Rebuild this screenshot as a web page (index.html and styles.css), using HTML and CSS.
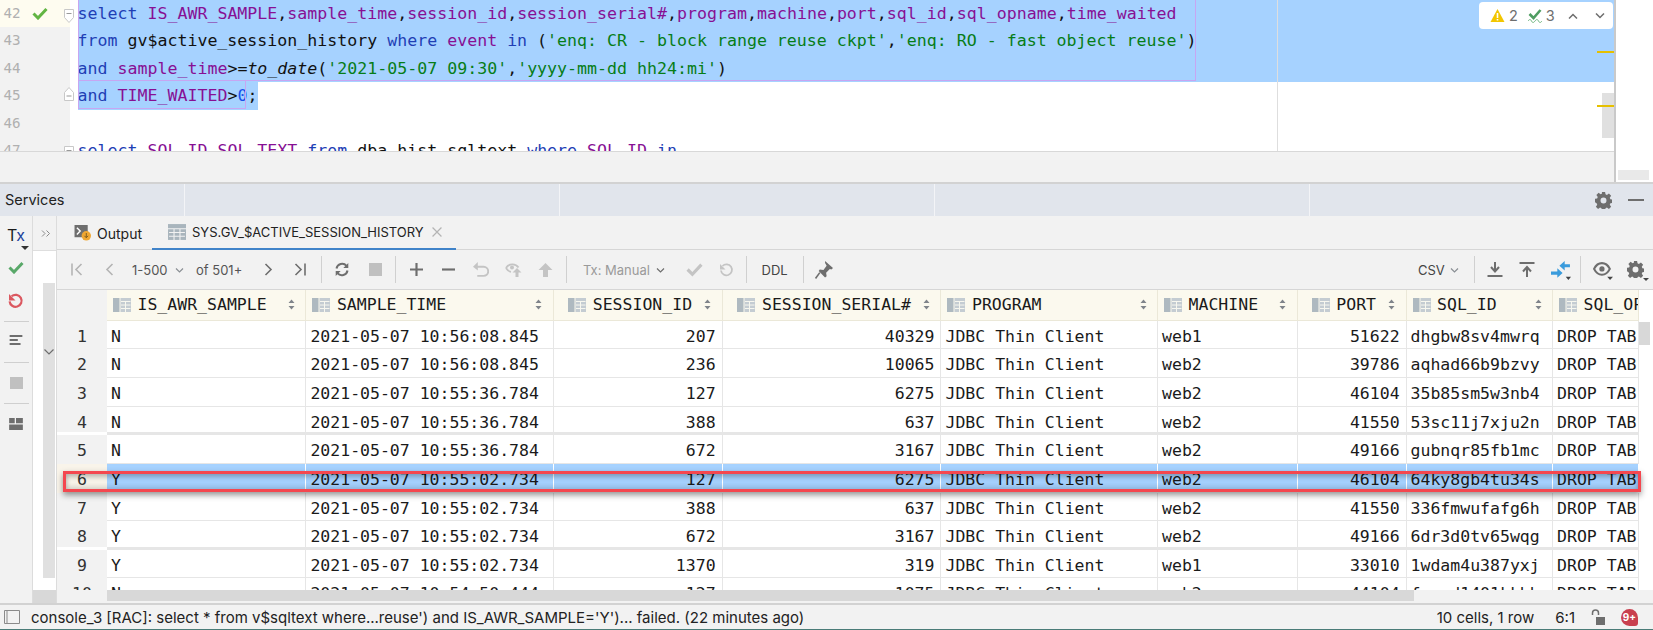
FILE: index.html
```html
<!DOCTYPE html>
<html lang="en">
<head>
<meta charset="utf-8">
<title>Services</title>
<link rel="stylesheet" href="styles.css">
</head>
<body>
<svg class="defs" width="0" height="0">
  <defs>
    <symbol id="col" viewBox="0 0 18 14">
      <rect x="0" y="0" width="6.500" height="14" fill="#aeb9c0"/>
      <rect x="7.500" y="0" width="10.500" height="14" fill="#c4ccd2"/>
      <path d="M8 3.500h9.500M8 7h9.500M8 10.500h9.500M12.500 3v11" stroke="#f7f7ef" stroke-width="1" fill="none"/>
    </symbol>
    <symbol id="sort" viewBox="0 0 7 11">
      <path d="M3.500 0.500 6.500 4h-6zM3.500 10.500 .5 7h6z" fill="#7f848a"/>
    </symbol>
    <symbol id="gear" viewBox="0 0 16 16">
      <path fill-rule="evenodd" fill="#6e6e6e" d="M6.500 0h3l.4 2.200 1.300.6 1.900-1.300 2.100 2.100-1.300 1.900.6 1.300 2.200.4v3l-2.200.4-.6 1.300 1.300 1.900-2.100 2.100-1.900-1.300-1.300.6-.4 2.200h-3l-.4-2.200-1.300-.6-1.900 1.300-2.100-2.100 1.300-1.900-.6-1.300L-.2 9.500v-3l2.200-.4.6-1.300L1.300 2.900 3.400.8l1.900 1.300 1.300-.6zM8 5.200a2.800 2.800 0 1 0 0 5.600 2.800 2.800 0 0 0 0-5.600z"/>
    </symbol>
  </defs>
</svg>

<section class="top">
  <div class="editor-col">
    <div class="editor">
      <div class="gutter">
        <div class="ln ln-active">42<svg class="ok-mark" viewBox="0 0 16 13"><path d="M1.500 6.500 6 11 14.500 2" fill="none" stroke="#62b543" stroke-width="3"/></svg></div>
        <div class="ln">43</div>
        <div class="ln">44</div>
        <div class="ln">45</div>
        <div class="ln">46</div>
        <div class="ln">47</div>
        <svg class="fold fold-a" viewBox="0 0 10 14"><path d="M.5.500h9v8L5 13.500.5 8.500z" fill="#fff" stroke="#c8c8c8"/><path d="M2.500 4.500h5" stroke="#999"/></svg>
        <svg class="fold fold-b" viewBox="0 0 10 14"><path d="M.5 13.500h9v-8L5 .5.500 5.500z" fill="#fff" stroke="#c8c8c8"/><path d="M2.500 9h5" stroke="#999"/></svg>
        <svg class="fold fold-c" viewBox="0 0 10 14"><path d="M.5.500h9v13h-9z" fill="#fff" stroke="#c8c8c8"/><path d="M2.500 4.500h5" stroke="#999"/></svg>
      </div>
      <div class="code">
        <div class="cl sel"><span class="k">select</span> <span class="i">IS_AWR_SAMPLE</span>,<span class="i">sample_time</span>,<span class="i">session_id</span>,<span class="i">session_serial#</span>,<span class="i">program</span>,<span class="i">machine</span>,<span class="i">port</span>,<span class="i">sql_id</span>,<span class="i">sql_opname</span>,<span class="i">time_waited</span></div>
        <div class="cl sel"><span class="k">from</span> gv$active_session_history <span class="k">where</span> <span class="i">event</span> <span class="k">in</span> (<span class="s">'enq: CR - block range reuse ckpt'</span>,<span class="s">'enq: RO - fast object reuse'</span>)</div>
        <div class="cl sel"><span class="k">and</span> <span class="i">sample_time</span>&gt;=<em>to_date</em>(<span class="s">'2021-05-07 09:30'</span>,<span class="s">'yyyy-mm-dd hh24:mi'</span>)</div>
        <div class="cl"><span class="sel-part"><span class="k">and</span> <span class="i">TIME_WAITED</span>&gt;<span class="n">0</span>;</span></div>
        <div class="cl"></div>
        <div class="cl"><span class="k">select</span> <span class="i">SQL_ID</span>,<span class="i">SQL_TEXT</span> <span class="k">from</span> dba_hist_sqltext <span class="k">where</span> <span class="i">SQL_ID</span> <span class="k">in</span></div>
        <div class="stmt stmt-a"></div>
        <div class="stmt stmt-b"></div>
        <div class="margin-line"></div>
      </div>
      <div class="inspect">
        <svg class="tri" viewBox="0 0 14 13"><path d="M7 0 14 13H0z" fill="#f2c600"/><path d="M6.200 4h1.600v5H6.200zM6.200 10h1.600v1.600H6.200z" fill="#fff"/></svg><span>2</span>
        <svg class="chk" viewBox="0 0 14 15"><path d="M1.500 6 5.500 10 12.500 2" fill="none" stroke="#4f9d62" stroke-width="2.600"/><path d="M0 13c1.500-2 2.500-2 3.500 0s2 2 3.500 0 2.500-2 3.500 0 2 2 3.500 0" fill="none" stroke="#6bb37c"/></svg><span class="num3">3</span>
        <svg class="nav nav-up" viewBox="0 0 10 6"><path d="M1 5.500 5 1.500l4 4" fill="none" stroke="#6e6e6e" stroke-width="1.500"/></svg>
        <svg class="nav nav-down" viewBox="0 0 10 6"><path d="M1 .5 5 4.500 9 .5" fill="none" stroke="#6e6e6e" stroke-width="1.500"/></svg>
      </div>
      <i class="mark mark-a"></i>
      <div class="editor-thumb"></div>
      <i class="mark mark-b"></i>
    </div>
    <div class="editor-foot"></div>
  </div>
  <div class="top-side"><div class="top-side-box"></div></div>
</section>

<header class="svc-bar">
  <span class="svc-seg svc-title">Services</span>
  <span class="svc-seg svc-s"></span>
  <span class="svc-seg svc-s"></span>
  <span class="svc-seg svc-s"></span>
  <span class="svc-end">
    <svg class="svc-gear"><use href="#gear"/></svg>
    <i class="svc-min"></i>
  </span>
</header>

<section class="svc-body">
  <aside class="strip">
    <div class="tx">T<span>x</span><i class="drop"></i></div>
    <svg class="s-ic s-check" viewBox="0 0 16 13"><path d="M1.500 6.500 6 11 14.500 2" fill="none" stroke="#59a869" stroke-width="3"/></svg>
    <svg class="s-ic s-undo" viewBox="0 0 16 16"><path d="M3.600 3.300a6 6 0 1 1-2 5" fill="none" stroke="#db5860" stroke-width="2.200"/><path d="M1 1v6.500h6.500z" fill="#db5860"/></svg>
    <hr class="s-sep s-sep-a">
    <svg class="s-ic s-list" viewBox="0 0 14 11"><path d="M0 0h14v2.200H0zM0 4.400h9v2.200H0zM0 8.800h12V11H0z" fill="#6e6e6e"/></svg>
    <hr class="s-sep s-sep-b">
    <i class="s-stop"></i>
    <hr class="s-sep s-sep-c">
    <svg class="s-ic s-grid" viewBox="0 0 16 14"><path d="M0 0h6.500v6H0zM8 0h8v6H8zM0 7.500h16V14H0z" fill="#6e6e6e"/></svg>
  </aside>
  <div class="collapse">
    <div class="collapse-top"><svg viewBox="0 0 9 7"><path d="M.5.500 3.500 3.500.5 6.500M5 .5 8 3.500 5 6.500" fill="none" stroke="#8a8a8a"/></svg></div>
    <div class="collapse-body">
      <div class="collapse-rail"><svg viewBox="0 0 10 6"><path d="M.5.500 5 5 9.500.5" fill="none" stroke="#6e6e6e" stroke-width="1.200"/></svg></div>
    </div>
  </div>
  <div class="pane">
    <nav class="tabs">
      <div class="tab tab-output">
        <svg class="tab-ic" viewBox="0 0 18 17"><rect x="0" y="0" width="14" height="13" fill="#6e6e6e"/><path d="M2.500 3 6 6.500 2.500 10" stroke="#fff" stroke-width="1.500" fill="none"/><circle cx="12.500" cy="11.500" r="5" fill="#f0a732"/><path d="M12.500 8.500v5M10.500 11.500l2 2 2-2" stroke="#7a5a1e" fill="none"/></svg>
        <span>Output</span>
      </div>
      <div class="tab tab-active">
        <svg class="tab-ic" viewBox="0 0 17 15"><rect width="17" height="15" fill="#a9b5bd"/><path d="M0 4.500h17M1 8h15M1 11.500h15M5.700 4v11M11.300 4v11" stroke="#f2f2f2"/></svg>
        <span>SYS.GV_$ACTIVE_SESSION_HISTORY</span>
        <svg class="tab-x" viewBox="0 0 9 9"><path d="M.5.500l8 8M8.500.5l-8 8" stroke="#b4b4b4" stroke-width="1.100"/></svg>
      </div>
    </nav>
    <div class="toolbar">
      <button class="tb"><svg class="w12" viewBox="0 0 12 13"><path d="M1 .5v12M10.500 1 5 6.500 10.500 12" fill="none" stroke="#b4b4b4" stroke-width="1.600"/></svg></button>
      <button class="tb"><svg class="w9" viewBox="0 0 8 13"><path d="M7 1 1.500 6.500 7 12" fill="none" stroke="#b4b4b4" stroke-width="1.600"/></svg></button>
      <span class="tb-text tb-range">1-500</span>
      <svg class="chev chev-a" viewBox="0 0 8 5"><path d="M.5.500 4 4 7.500.5" fill="none" stroke="#8a8f94" stroke-width="1.200"/></svg>
      <span class="tb-text tb-of">of 501+</span>
      <button class="tb tb-next"><svg class="w9" viewBox="0 0 8 13"><path d="M1 1l5.500 5.500L1 12" fill="none" stroke="#6e6e6e" stroke-width="1.600"/></svg></button>
      <button class="tb"><svg class="w12" viewBox="0 0 12 13"><path d="M11 .5v12M1.500 1 7 6.500 1.500 12" fill="none" stroke="#6e6e6e" stroke-width="1.600"/></svg></button>
      <i class="tb-sep tb-sep-a"></i>
      <button class="tb tb-refresh"><svg class="w16" viewBox="0 0 15 15"><path d="M2 6.500A5.700 5.700 0 0 1 12 3.800M13 8.500A5.700 5.700 0 0 1 3 11.200" fill="none" stroke="#6e6e6e" stroke-width="2"/><path d="M13.800 1v5h-5zM1.200 14V9h5z" fill="#6e6e6e"/></svg></button>
      <button class="tb tb-halt"><i class="tb-stop"></i></button>
      <i class="tb-sep tb-sep-b"></i>
      <button class="tb tb-add"><svg class="w13" viewBox="0 0 12 12"><path d="M6 0v12M0 6h12" stroke="#6e6e6e" stroke-width="2"/></svg></button>
      <button class="tb"><svg class="w13" viewBox="0 0 12 12"><path d="M0 6h12" stroke="#6e6e6e" stroke-width="2"/></svg></button>
      <button class="tb tb-undo"><svg class="w16" viewBox="0 0 15 14"><path d="M2 4.500h8a3.800 3.800 0 0 1 0 8.500H4" fill="none" stroke="#c4c4c4" stroke-width="1.800"/><path d="M4.500 0v8L0 4.500z" fill="#c4c4c4"/></svg></button>
      <button class="tb"><svg class="w17" viewBox="0 0 16 15"><path d="M.5 6C3 1.500 10 1 13 5.500" fill="none" stroke="#c4c4c4" stroke-width="1.800"/><path d="M.5 6c1.200 2 2.800 3.500 5 3.800" fill="none" stroke="#c4c4c4" stroke-width="1.800"/><circle cx="6.500" cy="5.500" r="2" fill="#c4c4c4"/><path d="M11.500 6 16 10.500h-3V15h-3v-4.500H7z" fill="#c4c4c4"/></svg></button>
      <button class="tb"><svg class="w15" viewBox="0 0 14 14"><path d="M7 0l7 7h-4.500v7h-5V7H0z" fill="#c4c4c4"/></svg></button>
      <i class="tb-sep tb-sep-c"></i>
      <span class="tb-text tb-tx">Tx: Manual</span>
      <svg class="chev chev-b" viewBox="0 0 8 5"><path d="M.5.500 4 4 7.500.5" fill="none" stroke="#6e6e6e" stroke-width="1.200"/></svg>
      <button class="tb tb-ok"><svg class="w17" viewBox="0 0 16 13"><path d="M1.500 6.500 6 11 14.500 2" fill="none" stroke="#c4c4c4" stroke-width="3"/></svg></button>
      <button class="tb tb-rev"><svg class="w15" viewBox="0 0 14 14"><path d="M3 3a5.500 5.500 0 1 1-1.500 4.500" fill="none" stroke="#c4c4c4" stroke-width="1.800"/><path d="M.5 1v5.500H6z" fill="#c4c4c4"/></svg></button>
      <i class="tb-sep tb-sep-d"></i>
      <span class="tb-text tb-ddl">DDL</span>
      <i class="tb-sep tb-sep-e"></i>
      <button class="tb tb-pin"><svg class="w18" viewBox="0 0 17 17"><path d="M9.500 0 17 6.500l-1.500 1.500-1.500-.5-3.500 3.500.5 3.500-1.500 1-6-6 1-1.500 3.500.5L11 4.500 9.500 2z" fill="#6e6e6e"/><path d="M4.500 11 .5 16.500" stroke="#6e6e6e" stroke-width="1.500"/></svg></button>
      <span class="tb-text tb-csv">CSV</span>
      <svg class="chev chev-c" viewBox="0 0 8 5"><path d="M.5.500 4 4 7.500.5" fill="none" stroke="#8a8f94" stroke-width="1.200"/></svg>
      <i class="tb-sep tb-sep-f"></i>
      <button class="tb tb-down"><svg class="w16" viewBox="0 0 15 15"><path d="M7.500 0v8M3.500 5l4 4.500 4-4.500" fill="none" stroke="#6e6e6e" stroke-width="2"/><path d="M0 14h15" stroke="#6e6e6e" stroke-width="2"/></svg></button>
      <button class="tb"><svg class="w16" viewBox="0 0 15 15"><path d="M7.500 15V6.500M3.500 9.500l4-4.500 4 4.500" fill="none" stroke="#6e6e6e" stroke-width="2"/><path d="M0 1h15" stroke="#6e6e6e" stroke-width="2"/></svg></button>
      <button class="tb tb-cmp"><svg viewBox="0 0 19 19"><path d="M0 10h6V7l5 4.500L6 16v-3H0zM18 3v3h-5v3L8 4.500 13 0v3z" fill="#3a9bdc"/><path d="M14 15h5l-2.500 3z" fill="#444"/></svg></button>
      <i class="tb-sep tb-sep-g"></i>
      <button class="tb tb-eye"><svg viewBox="0 0 19 17"><path d="M1 6.500C3 2.500 6 1 8.500 1S14 2.500 16 6.500C14 10.500 11 12 8.500 12S3 10.500 1 6.500z" fill="none" stroke="#6e6e6e" stroke-width="2"/><circle cx="8.500" cy="6.500" r="2.500" fill="#6e6e6e"/><path d="M13.500 14h5.500L16.200 17z" fill="#444"/></svg></button>
      <button class="tb tb-set"><svg class="set-g"><use href="#gear"/></svg><i class="drop"></i></button>
    </div>

    <div class="table-area">
      <div class="grid" role="table">
        <div class="row head">
          <div class="hc corner"></div>
          <div class="hc"><svg class="hi"><use href="#col"/></svg><span class="ht">IS_AWR_SAMPLE</span><svg class="so"><use href="#sort"/></svg></div>
          <div class="hc"><svg class="hi"><use href="#col"/></svg><span class="ht">SAMPLE_TIME</span><svg class="so"><use href="#sort"/></svg></div>
          <div class="hc hr"><svg class="hi"><use href="#col"/></svg><span class="ht">SESSION_ID</span><svg class="so"><use href="#sort"/></svg></div>
          <div class="hc hr"><svg class="hi"><use href="#col"/></svg><span class="ht">SESSION_SERIAL#</span><svg class="so"><use href="#sort"/></svg></div>
          <div class="hc"><svg class="hi"><use href="#col"/></svg><span class="ht">PROGRAM</span><svg class="so"><use href="#sort"/></svg></div>
          <div class="hc"><svg class="hi"><use href="#col"/></svg><span class="ht">MACHINE</span><svg class="so"><use href="#sort"/></svg></div>
          <div class="hc hr"><svg class="hi"><use href="#col"/></svg><span class="ht">PORT</span><svg class="so"><use href="#sort"/></svg></div>
          <div class="hc"><svg class="hi"><use href="#col"/></svg><span class="ht">SQL_ID</span><svg class="so"><use href="#sort"/></svg></div>
          <div class="hc"><svg class="hi"><use href="#col"/></svg><span class="ht">SQL_OPNAME</span></div>
        </div>
        <div class="row"><div class="c num">1</div><div class="c">N</div><div class="c">2021-05-07 10:56:08.845</div><div class="c r">207</div><div class="c r">40329</div><div class="c">JDBC Thin Client</div><div class="c">web1</div><div class="c r">51622</div><div class="c">dhgbw8sv4mwrq</div><div class="c">DROP TAB</div></div>
        <div class="row"><div class="c num">2</div><div class="c">N</div><div class="c">2021-05-07 10:56:08.845</div><div class="c r">236</div><div class="c r">10065</div><div class="c">JDBC Thin Client</div><div class="c">web2</div><div class="c r">39786</div><div class="c">aqhad66b9bzvy</div><div class="c">DROP TAB</div></div>
        <div class="row"><div class="c num">3</div><div class="c">N</div><div class="c">2021-05-07 10:55:36.784</div><div class="c r">127</div><div class="c r">6275</div><div class="c">JDBC Thin Client</div><div class="c">web2</div><div class="c r">46104</div><div class="c">35b85sm5w3nb4</div><div class="c">DROP TAB</div></div>
        <div class="row thick"><div class="c num">4</div><div class="c">N</div><div class="c">2021-05-07 10:55:36.784</div><div class="c r">388</div><div class="c r">637</div><div class="c">JDBC Thin Client</div><div class="c">web2</div><div class="c r">41550</div><div class="c">53sc11j7xju2n</div><div class="c">DROP TAB</div></div>
        <div class="row"><div class="c num">5</div><div class="c">N</div><div class="c">2021-05-07 10:55:36.784</div><div class="c r">672</div><div class="c r">3167</div><div class="c">JDBC Thin Client</div><div class="c">web2</div><div class="c r">49166</div><div class="c">gubnqr85fb1mc</div><div class="c">DROP TAB</div></div>
        <div class="row selected"><div class="c num">6</div><div class="c">Y</div><div class="c">2021-05-07 10:55:02.734</div><div class="c r">127</div><div class="c r">6275</div><div class="c">JDBC Thin Client</div><div class="c">web2</div><div class="c r">46104</div><div class="c">64ky8gb4tu34s</div><div class="c">DROP TAB</div></div>
        <div class="row"><div class="c num">7</div><div class="c">Y</div><div class="c">2021-05-07 10:55:02.734</div><div class="c r">388</div><div class="c r">637</div><div class="c">JDBC Thin Client</div><div class="c">web2</div><div class="c r">41550</div><div class="c">336fmwufafg6h</div><div class="c">DROP TAB</div></div>
        <div class="row thick"><div class="c num">8</div><div class="c">Y</div><div class="c">2021-05-07 10:55:02.734</div><div class="c r">672</div><div class="c r">3167</div><div class="c">JDBC Thin Client</div><div class="c">web2</div><div class="c r">49166</div><div class="c">6dr3d0tv65wqg</div><div class="c">DROP TAB</div></div>
        <div class="row"><div class="c num">9</div><div class="c">Y</div><div class="c">2021-05-07 10:55:02.734</div><div class="c r">1370</div><div class="c r">319</div><div class="c">JDBC Thin Client</div><div class="c">web1</div><div class="c r">33010</div><div class="c">1wdam4u387yxj</div><div class="c">DROP TAB</div></div>
        <div class="row"><div class="c num">10</div><div class="c">N</div><div class="c">2021-05-07 10:54:50.444</div><div class="c r">127</div><div class="c r">1075</div><div class="c">JDBC Thin Client</div><div class="c">web2</div><div class="c r">44104</div><div class="c">fgqud1401kkbb</div><div class="c">DROP TAB</div></div>
      </div>
      <div class="vscroll"><i></i></div>
    </div>
    <div class="hscroll"><span class="hs-corner"></span><i></i></div>
  </div>
</section>

<footer class="status">
  <svg class="st-ic" viewBox="0 0 16 14"><path d="M.5.500h15v13H.5z" fill="none" stroke="#8a8a8a"/><path d="M3 1v12" stroke="#8a8a8a"/></svg>
  <span class="st-msg">console_3 [RAC]: select * from v$sqltext where...reuse') and IS_AWR_SAMPLE='Y')... failed. (22 minutes ago)</span>
  <span class="st-cells">10 cells, 1 row</span>
  <span class="st-pos">6:1</span>
  <svg class="st-lock" viewBox="0 0 15 16"><path d="M1.500 6V4a3 3 0 0 1 6 0v2" fill="none" stroke="#6e6e6e" stroke-width="1.500"/><rect x="5" y="8" width="9" height="8" fill="#6e6e6e"/></svg>
  <span class="st-badge">9+</span>
</footer>

<div class="callout"></div>
</body>
</html>
```

FILE: styles.css
```css
* { box-sizing: border-box; }
html, body { margin: 0; padding: 0; }
body {
  position: relative;
  width: 1653px;
  height: 630px;
  overflow: hidden;
  display: flex;
  flex-direction: column;
  background: #f2f2f2;
  color: #222;
  font-family: Inter, "Noto Sans", sans-serif;
  font-size: 14px;
}
.defs { position: absolute; }

/* editor */
.top { display: flex; height: 182px; flex: none; }
.editor-col { width: 1614px; display: flex; flex-direction: column; }
.editor { position: relative; height: 152px; display: flex; overflow: hidden; background: #fff; border-bottom: 1px solid #d8d8d8; }
.gutter { position: relative; width: 69.5px; flex: none; background: #f2f2f2; }
.ln { position: relative; height: 27.4px; padding-left: 3.5px; font: 14.2px/27.4px "DejaVu Sans Mono", monospace; color: #b0b0b0; }
.ln-active { background: #fefcf0; }
.ok-mark { position: absolute; left: 32px; top: 7px; width: 16px; height: 13px; }
.fold { position: absolute; left: 64px; width: 10px; height: 14px; z-index: 2; }
.fold-a { top: 9px; }
.fold-b { top: 87px; }
.fold-c { top: 146px; }
.code { position: relative; flex: 1; font: 16.6px/27.4px "DejaVu Sans Mono", monospace; color: #111; }
.cl { height: 27.4px; padding-left: 8px; white-space: pre; }
.cl.sel { background: linear-gradient(#a6d2ff, #a6d2ff) no-repeat 8px 0 / 100% 100%; }
.sel-part { display: inline-block; height: 27.4px; width: 180px; background: #a6d2ff; }
.k { color: #1f3fb5; }
.i { color: #871094; }
.s { color: #067d17; }
.n { color: #1750eb; }
.cl em { font-style: italic; }
.stmt { position: absolute; border: 1px solid #c7a6f2; pointer-events: none; }
.stmt-a { left: 8px; top: -2px; width: 1118.5px; height: 83px; }
.stmt-b { left: 8px; top: 80px; width: 168.5px; height: 29px; border-top: 0; }
.margin-line { position: absolute; left: 1207.5px; top: 0; bottom: 0; width: 1px; background: #dedede; }
.inspect {
  position: absolute; left: 1478.5px; top: 2px; width: 134px; height: 27px;
  display: flex; align-items: center; padding-left: 11.5px;
  background: #fff; border-radius: 4px; color: #6e6e6e; font-size: 14.5px;
}
.tri { width: 15px; height: 13px; margin-right: 4px; flex: none; }
.chk { width: 14px; height: 15px; margin-left: 10px; margin-right: 4px; flex: none; }
.nav { width: 10px; height: 6px; flex: none; }
.nav-up { margin-left: 13.5px; }
.nav-down { margin-left: 17px; }
.mark { position: absolute; left: 1597px; width: 17px; height: 2px; background: #e6c000; z-index: 2; }
.mark-a { top: 51px; }
.mark-b { top: 105px; }
.editor-thumb { position: absolute; left: 1602px; top: 93px; width: 12px; height: 45px; background: #e0e0e0; }
.editor-foot { flex: 1; background: #f2f2f2; }
.top-side { flex: 1; background: #fff; border-left: 2px solid #c9c9c9; position: relative; }
.top-side-box { position: absolute; left: 1px; right: 3px; top: 169px; height: 12px; background: #e9e9e9; border: 1px solid #fff; }

/* services title bar */
.svc-bar { height: 34px; flex: none; display: flex; align-items: stretch; background: #e1e5ec; border-top: 2px solid #d2d2d2; }
.svc-seg { display: block; border-right: 1px solid #f3f4f7; }
.svc-title { width: 185px; padding-left: 5px; line-height: 32px; font-size: 14.5px; color: #222; }
.svc-s { width: 375px; }
.svc-end { flex: 1; display: flex; align-items: center; justify-content: flex-end; gap: 16px; padding-right: 9px; }
.svc-gear { width: 17px; height: 17px; }
.svc-min { width: 16px; height: 2px; background: #6e6e6e; }

/* services body */
.svc-body { flex: none; height: 387px; display: flex; }
.strip { width: 33px; flex: none; border-right: 1px solid #dcdcdc; display: flex; flex-direction: column; align-items: center; padding-top: 9px; }
.tx { position: relative; width: 20px; height: 24px; font-size: 16px; line-height: 20px; text-align: center; color: #1b1b1b; flex: none; }
.tx span { color: #1b3f9a; }
.drop { position: absolute; width: 0; height: 0; border: 4px solid transparent; border-top: 4px solid #333; border-bottom: 0; }
.tx .drop { right: -3px; top: 21px; }
.s-ic { display: block; flex: none; }
.s-check { width: 16px; height: 13px; margin-top: 12px; }
.s-undo { width: 16px; height: 16px; margin-top: 19px; }
.s-sep { width: 25px; height: 1px; border: 0; background: #cfcfcf; margin: 0; flex: none; }
.s-sep-a { margin-top: 12px; }
.s-list { width: 14px; height: 10px; margin-top: 13px; }
.s-sep-b { margin-top: 17px; }
.s-stop { display: block; width: 13px; height: 12px; background: #c0c0c0; margin-top: 14px; flex: none; }
.s-sep-c { margin-top: 14px; }
.s-grid { width: 16px; height: 12px; margin-top: 14px; }

.collapse { width: 24px; flex: none; display: flex; flex-direction: column; border-right: 1px solid #dcdcdc; }
.collapse-top { height: 35px; flex: none; display: flex; align-items: center; justify-content: center; border-bottom: 1px solid #dedede; padding-left: 2px; }
.collapse-top svg { width: 10px; height: 7px; }
.collapse-body { position: relative; flex: 1; background: #fff; padding: 32px 1px 25px 10px; }
.collapse-body::after { content: ""; position: absolute; left: 0; right: 0; bottom: 0; height: 13px; background: #d8d8d8; }
.collapse-rail { height: 100%; width: 12px; background: #e0e0e0; display: flex; justify-content: center; padding-top: 66px; }
.collapse-rail svg { width: 10px; height: 6px; }

.pane { flex: 1; min-width: 0; display: flex; flex-direction: column; }
.tabs { height: 34px; flex: none; display: flex; border-bottom: 1px solid #d6d6d6; padding-left: 17px; background: #f2f2f2; }
.tab { display: flex; align-items: center; height: 34px; font-size: 14px; color: #222; flex: none; }
.tab-output { width: 78px; gap: 5px; }
.tab-ic { width: 18px; height: 16px; flex: none; }
.tab-active { width: 304px; padding-left: 16px; gap: 6px; border-bottom: 2px solid #4083c9; font-size: 13px; }
.tab-x { width: 10px; height: 10px; margin-left: 2px; flex: none; }

.toolbar { height: 40px; flex: none; display: flex; align-items: center; padding: 0 2px 0 4px; border-bottom: 1px solid #d6d6d6; }
.tb { position: relative; width: 32px; height: 24px; flex: none; border: 0; padding: 0; background: none; display: flex; align-items: center; justify-content: center; }
.tb svg { display: block; }
.w9 { width: 9px; height: 13px; }
.w12 { width: 12px; height: 13px; }
.w13 { width: 13px; height: 13px; }
.w15 { width: 15px; height: 14px; }
.w16 { width: 16px; height: 15px; }
.w17 { width: 17px; height: 15px; }
.w18 { width: 18px; height: 18px; }
.tb-text { flex: none; font-size: 13px; color: #555; white-space: nowrap; }
.tb-range { margin-left: 7px; width: 36px; }
.chev { width: 9px; height: 5px; flex: none; margin-top: 2px; }
.chev-a { margin-left: 7px; }
.tb-of { margin-left: 12px; width: 47px; }
.tb-next { margin-left: 9px; }
.tb-sep { width: 1px; height: 27px; background: #d0d0d0; flex: none; }
.tb-sep-a { margin-left: 5px; }
.tb-refresh { margin-left: 4px; }
.tb-halt { margin-left: 1px; }
.tb-stop { display: block; width: 13px; height: 13px; background: #c0c0c0; }
.tb-sep-b { margin-left: 4px; }
.tb-add { margin-left: 4px; }
.tb-undo { margin-left: 1px; }
.tb-sep-c { margin-left: 5px; }
.tb-tx { margin-left: 16px; width: 63px; color: #9a9a9a; }
.chev-b { margin-left: 10px; }
.tb-ok { margin-left: 13.5px; }
.tb-rev { margin-left: -.5px; }
.tb-sep-d { margin-left: 4px; }
.tb-ddl { margin-left: 14.5px; width: 25px; color: #444; }
.tb-sep-e { margin-left: 16.5px; }
.tb-pin { margin-left: 3.5px; }
.tb-csv { margin-left: auto; width: 24px; color: #444; }
.chev-c { margin-left: 8px; }
.tb-sep-f { margin-left: 14.5px; }
.tb-down { margin-left: 4.5px; }
.tb-cmp { margin-left: 2px; }
.tb-cmp svg { width: 20px; height: 20px; margin-top: 2px; }
.tb-sep-g { margin-left: 3px; }
.tb-eye { margin-left: 5px; }
.tb-eye svg { width: 20px; height: 18px; margin-top: 2px; margin-left: 2px; }
.tb-set { margin-left: 1px; }
.tb-set .set-g { width: 17px; height: 17px; }
.tb-set .drop { right: 2px; bottom: 1px; border-width: 3.5px; border-bottom: 0; border-top-color: #444; }

/* result grid */
.table-area { height: 300px; flex: none; display: flex; overflow: hidden; background: #fff; }
.grid { width: 1582px; flex: none; font: 16.5px/20px "DejaVu Sans Mono", monospace; color: #1a1a1a; overflow: hidden; }
.row { display: grid; grid-template-columns: 50px 199.4px 247.2px 169px 218.9px 216.6px 139.5px 109px 146.5px 86px; height: 28.65px; }
.head { height: 30.7px; }
.hc { display: flex; align-items: center; padding-left: 6px; background: #fbf9ee; border-right: 1px solid #ebe8d8; border-bottom: 1px solid #ebe8d8; overflow: hidden; white-space: nowrap; }
.corner { background: #f2f2f2; border-bottom: 0; border-right: 0; }
.hi { width: 18px; height: 14px; flex: none; margin-right: 6.5px; }
.ht { flex: 1; min-width: 0; }
.so { width: 7px; height: 11px; flex: none; margin: 0 10.5px 0 12px; }
.hr { padding-left: 0; justify-content: flex-end; }
.hr .ht { flex: none; }
.c { padding: 6px 0 0 4px; border-right: 1px solid #e6e6e6; border-bottom: 1px solid #e6e6e6; white-space: nowrap; overflow: hidden; background: #fff; }
.r { text-align: right; padding: 6px 6px 0 0; }
.num { background: #f2f2f2; border: 0; padding: 6px 0 0; text-align: center; color: #333; }
.thick .c { border-bottom-width: 3px; }
.thick .num { border-bottom: 3px solid #fff; }
.selected .c { background: #a6d2ff; border-right-color: #fff; border-bottom-color: #fff; }
.selected .num { background: #f9f4ea; }
.vscroll { width: 11px; flex: none; background: #fff; padding-top: 32px; }
.vscroll i { display: block; height: 23px; background: #d8d8d8; }
.hscroll { height: 13px; flex: none; display: flex; background: #f2f2f2; }
.hs-corner { width: 50px; flex: none; }
.hscroll i { display: block; width: 1307px; height: 11px; background: #d8d8d8; }

/* status bar */
.status { height: 27px; flex: none; display: flex; align-items: center; background: #f2f2f2; border-top: 2px solid #d2d2d2; border-bottom: 1px solid #4a7c78; font-size: 15px; color: #222; padding-left: 3px; }
.st-ic { width: 18px; height: 14px; flex: none; }
.st-msg { margin-left: 10px; flex: 1; white-space: nowrap; }
.st-cells { margin-right: 21px; }
.st-pos { margin-right: 15.5px; }
.st-lock { width: 15px; height: 16px; margin-right: 15.5px; flex: none; }
.st-badge { width: 17px; height: 17px; border-radius: 50% 50% 3px 50%; background: #c9404f; color: #fff; font-size: 10px; font-weight: 700; text-align: center; line-height: 17px; margin-right: 15px; flex: none; }

/* annotation */
.callout { position: absolute; left: 63px; top: 471px; width: 1578px; height: 21px; border: 3px solid #f4474f; box-shadow: 0 3px 6px rgba(0,0,0,.42), inset 0 3px 5px rgba(0,0,0,.25), inset 0 -3px 5px rgba(0,0,0,.12); pointer-events: none; }
```
